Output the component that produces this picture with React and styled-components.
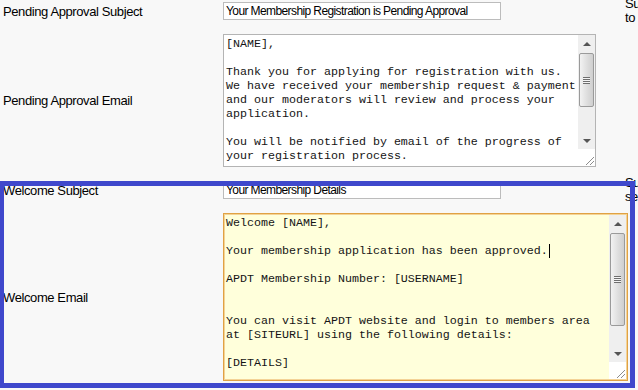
import React from 'react';
import styled, { createGlobalStyle } from 'styled-components';

const GlobalStyle = createGlobalStyle`
    html, body {
        margin: 0;
        padding: 0;
        background: #f8f8f8;
        overflow: hidden;
    }
    body {
        font-family: "Liberation Sans", Arial, sans-serif;
    }
`;

const Page = styled.div`
    position: relative;
    display: grid;
    grid-template-columns: 220px 402px 220px;
    grid-template-rows: 18px 133px 18px 168px;
    row-gap: 14px;
    padding: 2px 0 0 3px;
    width: 638px;
    height: 390px;
    box-sizing: border-box;
    overflow: hidden;
`;

const Label = styled.div`
    align-self: center;
    font-size: 13px;
    line-height: 15px;
    letter-spacing: -0.4px;
    color: #000;
    white-space: nowrap;
`;

const Field = styled.div`
    align-self: start;
    min-height: 0;
`;

const Hint = styled.div`
    align-self: center;
    height: 0;
    display: flex;
    align-items: center;
    font-size: 13px;
    line-height: 14px;
    letter-spacing: -0.4px;
    color: #000;
    white-space: nowrap;
`;

const SubjectInput = styled.input`
    display: block;
    width: 278px;
    height: 18px;
    box-sizing: border-box;
    margin: 0;
    padding: 0 2px;
    border: 1px solid #bcbcbc;
    background: #fff;
    font-family: "Liberation Sans", Arial, sans-serif;
    font-size: 12px;
    letter-spacing: -0.6px;
    color: #000;
    outline: none;
`;

const EmailBox = styled.div`
    display: flex;
    width: ${p => p.$width}px;
    height: ${p => p.$height}px;
    box-sizing: border-box;
    border: 1px solid ${p => (p.$focused ? '#e0a244' : '#b4b4b4')};
    box-shadow: ${p => (p.$focused ? 'inset 0 0 0 1px #f4d396' : 'none')};
    background: ${p => (p.$focused ? '#ffffdb' : '#fff')};
    padding: ${p => (p.$focused ? '1px' : '0')};
`;

const Body = styled.div`
    flex: 1;
    overflow: hidden;
    padding: ${p => (p.$focused ? '1px 0 0 1px' : '2px 0 0 2px')};
    font-family: "Liberation Mono", "Courier New", monospace;
    font-size: 11.67px;
    line-height: 14px;
    color: #141414;
`;

const Line = styled.div`
    height: 14px;
    white-space: pre;
`;

const Caret = styled.span`
    display: inline-block;
    width: 1px;
    height: 14px;
    margin-left: 1px;
    background: #000;
    vertical-align: top;
`;

const ScrollBar = styled.div`
    width: 17px;
    display: flex;
    flex-direction: column;
    background: #efefef;
`;

const ArrowButton = styled.div`
    height: 17px;
    display: flex;
    align-items: center;
    justify-content: center;
    &::after {
        content: '';
        border-left: 4px solid transparent;
        border-right: 4px solid transparent;
        ${p => (p.$down ? 'border-top: 4px solid #555;' : 'border-bottom: 4px solid #555;')}
    }
`;

const Thumb = styled.div`
    height: ${p => p.$size}px;
    margin: 1px 1px 0;
    border: 1px solid #9a9a9a;
    border-radius: 2px;
    box-sizing: border-box;
    background: linear-gradient(to right, #f2f2f2, #dcdcdc 60%, #cfcfcf);
    display: flex;
    align-items: center;
    justify-content: center;
`;

const Grip = styled.div`
    width: 7px;
    height: 7px;
    background: repeating-linear-gradient(
        to bottom,
        #6e6e6e 0,
        #6e6e6e 1px,
        #f4f4f4 1px,
        #f4f4f4 2px
    );
`;

const Track = styled.div`
    flex: 1;
`;

const Corner = styled.div`
    height: 17px;
    background: #fff;
    display: flex;
    align-items: flex-end;
    justify-content: flex-end;
`;

const Highlight = styled.div`
    position: absolute;
    left: -1px;
    top: 181px;
    width: 636px;
    height: 207px;
    border: 5px solid #3f48cc;
    box-sizing: border-box;
    pointer-events: none;
`;

const ResizeGrip = () => (
    <svg width="12" height="12" viewBox="0 0 12 12">
        <path d="M3 11 L11 3 M7 11 L11 7" stroke="#8c8c8c" strokeWidth="1" />
    </svg>
);

const FakeScroll = ({ thumb }) => (
    <ScrollBar>
        <ArrowButton />
        <Thumb $size={thumb}>
            <Grip />
        </Thumb>
        <Track />
        <ArrowButton $down />
        <Corner>
            <ResizeGrip />
        </Corner>
    </ScrollBar>
);

const pendingLines = [
    '[NAME],',
    '',
    'Thank you for applying for registration with us.',
    'We have received your membership request & payment',
    'and our moderators will review and process your',
    'application.',
    '',
    'You will be notified by email of the progress of',
    'your registration process.',
];

const welcomeLines = [
    'Welcome [NAME],',
    '',
    'Your membership application has been approved.',
    '',
    'APDT Membership Number: [USERNAME]',
    '',
    '',
    'You can visit APDT website and login to members area',
    'at [SITEURL] using the following details:',
    '',
    '[DETAILS]',
    '',
];

export default function App() {
    return (
        <>
            <GlobalStyle />
            <Page>
                <Label>Pending Approval Subject</Label>
                <Field>
                    <SubjectInput readOnly defaultValue="Your Membership Registration is Pending Approval" />
                </Field>
                <Hint>
                    Subject of the email sent
                    <br />
                    to pending applicants
                </Hint>

                <Label>Pending Approval Email</Label>
                <Field>
                    <EmailBox $width={373} $height={133}>
                        <Body>
                            {pendingLines.map((l, i) => (
                                <Line key={i}>{l || ' '}</Line>
                            ))}
                        </Body>
                        <FakeScroll thumb={54} />
                    </EmailBox>
                </Field>
                <Hint />

                <Label>Welcome Subject</Label>
                <Field>
                    <SubjectInput readOnly defaultValue="Your Membership Details" />
                </Field>
                <Hint>
                    Subject of the welcome email
                    <br />
                    sent to approved members
                </Hint>

                <Label>Welcome Email</Label>
                <Field>
                    <EmailBox $focused $width={405} $height={168}>
                        <Body $focused>
                            {welcomeLines.map((l, i) => (
                                <Line key={i}>
                                    {l || ' '}
                                    {i === 2 && <Caret />}
                                </Line>
                            ))}
                        </Body>
                        <FakeScroll thumb={93} />
                    </EmailBox>
                </Field>
                <Hint />

                <Highlight />
            </Page>
        </>
    );
}
